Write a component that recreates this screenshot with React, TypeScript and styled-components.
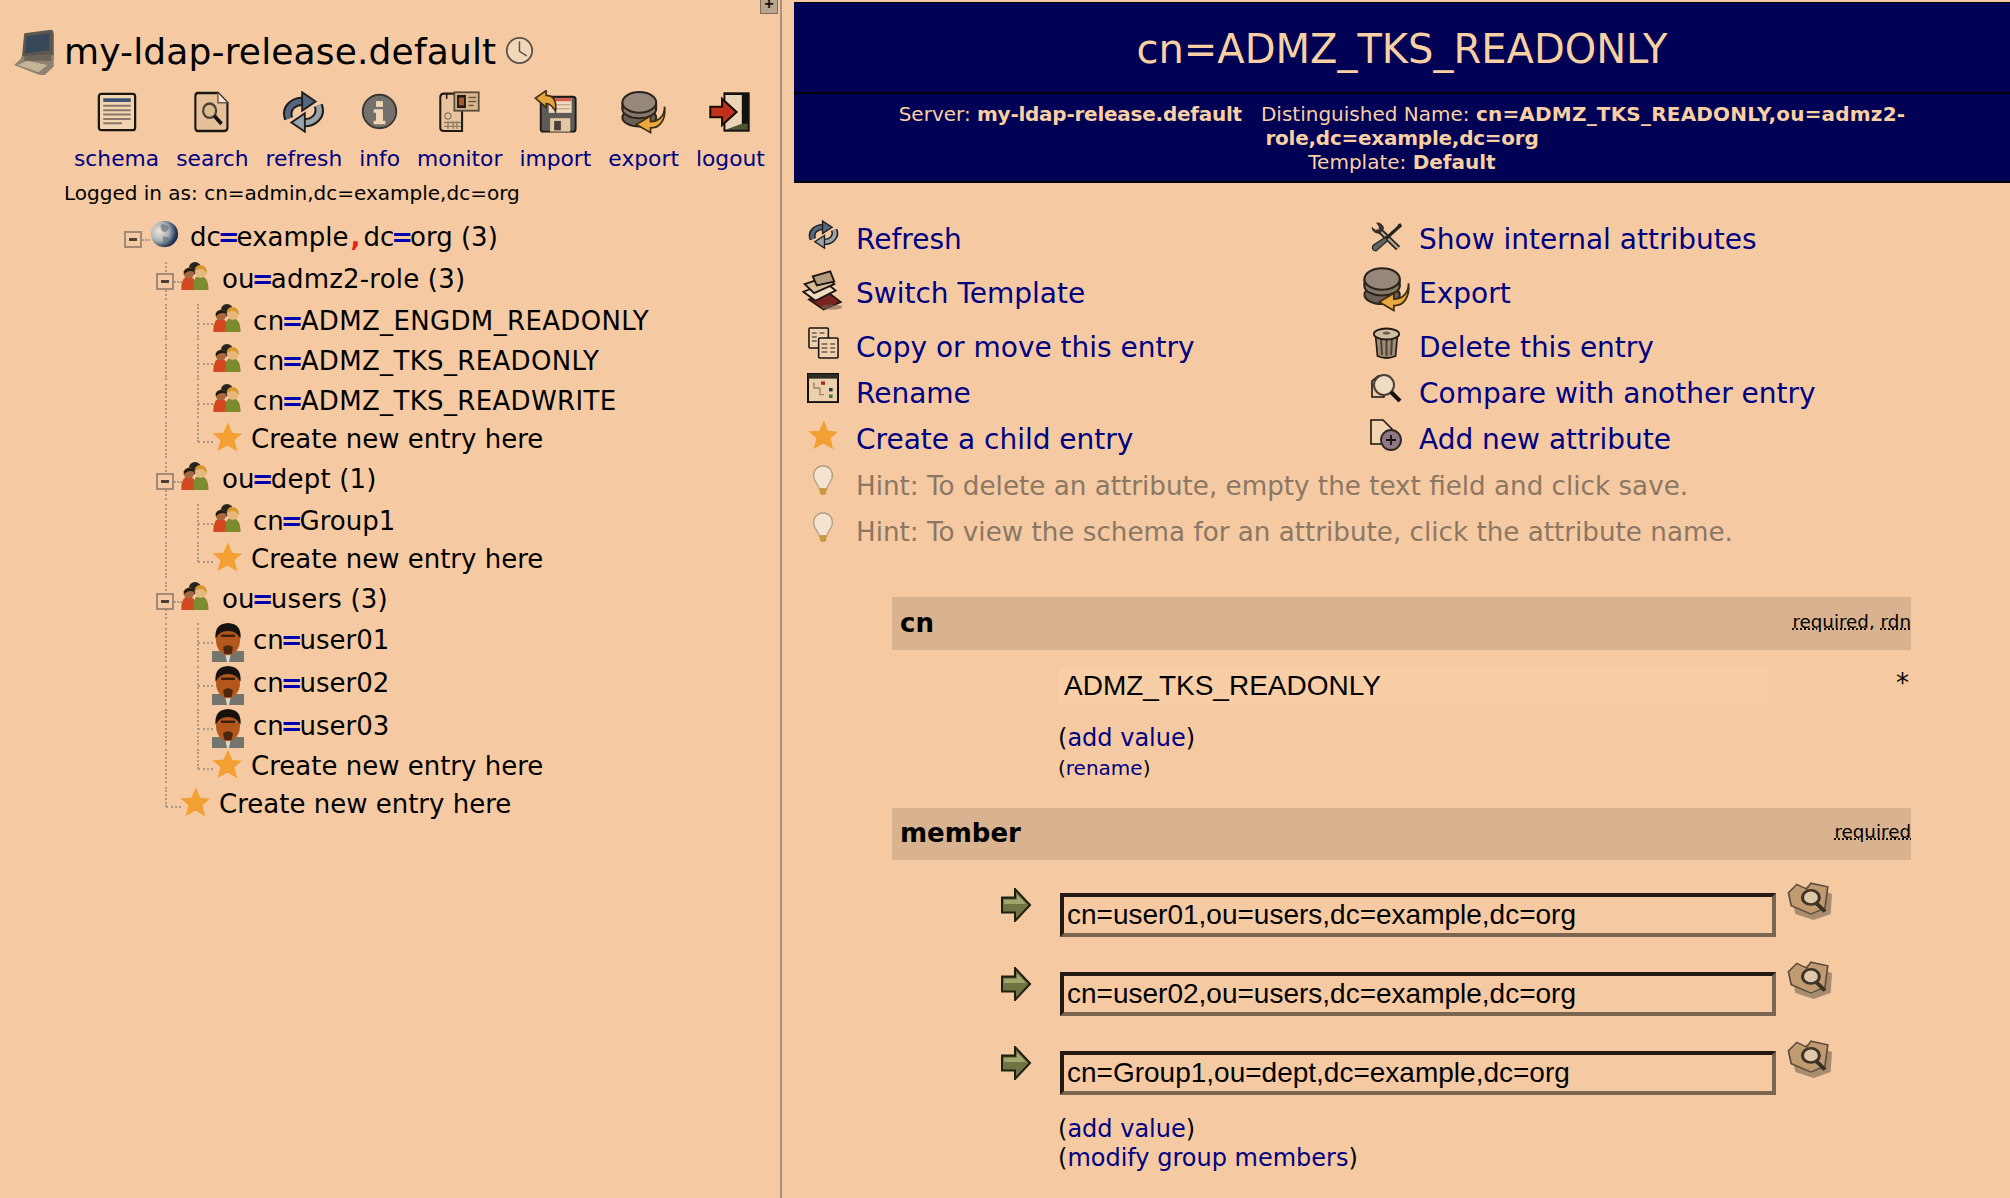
import styled, { createGlobalStyle } from "styled-components";
import { ReactNode } from "react";

const GlobalStyle = createGlobalStyle`
  html, body {
    margin: 0;
    height: 100%;
    overflow: hidden;
    background: #f5caa3;
  }
  body {
    font-family: "DejaVu Sans", Verdana, sans-serif;
    color: #000;
  }
`;

type IconProps = { w?: number; h?: number; up?: number };

const Glyph = styled.svg<{ $w: number; $h: number; $up: number }>`
  display: block;
  flex: none;
  width: ${(p) => p.$w}px;
  height: ${(p) => p.$h}px;
  margin-bottom: ${(p) => p.$up}px;
  filter: blur(0.45px);
`;

const Icon = ({ w = 30, h = 30, up = 0, children }: IconProps & { children: ReactNode }) => (
  <Glyph viewBox="0 0 32 32" preserveAspectRatio="none" $w={w} $h={h} $up={up}>
    {children}
  </Glyph>
);

const ComputerIcon = (p: IconProps) => (
  <Icon {...p}>
    <path d="M8 3 L29 0.5 Q31 1 31 4 L31 19 L30 24 L6 21 Z" fill="#5e574d" />
    <path d="M10 5 L28 3 L27.5 15 L8.5 17 Z" fill="#36485a" />
    <path d="M6 19 L31 18 L31 26 L24 32 L20 32 L0 25 L5 21 Z" fill="#8f8270" />
    <path d="M3 25 L19 30 L26 25 L10 22 Z" fill="#c6b498" />
    <path d="M8 19 L29 18 L29 22 L8 22 Z" fill="#6c6457" />
  </Icon>
);

const ClockIcon = (p: IconProps) => (
  <Icon {...p}>
    <circle cx="16" cy="16" r="14" fill="#f0d7ba" stroke="#5b5045" strokeWidth="2" />
    <path d="M16 6 L16 17 L24 22" fill="none" stroke="#5b5045" strokeWidth="1.6" />
  </Icon>
);

const SchemaIcon = (p: IconProps) => (
  <Icon {...p}>
    <rect x="1.5" y="1.5" width="29" height="29" rx="2" fill="#f2d4b0" stroke="#1a1612" strokeWidth="1.8" />
    <rect x="5" y="5" width="22" height="3" fill="#3c5270" />
    <path d="M5 11 H27 M5 14.5 H27 M5 18 H27 M5 21.5 H27 M5 25 H20" stroke="#86796a" strokeWidth="1.6" />
  </Icon>
);

const SearchPageIcon = (p: IconProps) => (
  <Icon {...p}>
    <path d="M4 1.5 H21 L29 9 V28 Q29 30.5 26 30.5 H4 Q2 30.5 2 28 V4 Q2 1.5 4 1.5 Z" fill="#e6c098" stroke="#1c1712" strokeWidth="1.8" />
    <path d="M21 1.5 V9 H29" fill="#f7e3cb" stroke="#6a5b4b" strokeWidth="1.2" />
    <circle cx="14" cy="15" r="5.5" fill="#d9bb8e" stroke="#4a4036" strokeWidth="1.8" />
    <path d="M18 19 L24 25" stroke="#14110e" strokeWidth="3" />
  </Icon>
);

const RefreshIcon = (p: IconProps) => (
  <Icon {...p}>
    <path d="M5 21 C2 13 9 7 17 8" fill="none" stroke="#1d1d1d" strokeWidth="7" />
    <path d="M5 21 C2 13 9 7 17 8" fill="none" stroke="#54677c" strokeWidth="4" />
    <path d="M15 1 L25 8 L15 15 Z" fill="#54677c" stroke="#1d1d1d" strokeWidth="1.4" />
    <path d="M27 11 C30 19 23 25 15 24" fill="none" stroke="#1d1d1d" strokeWidth="7" />
    <path d="M27 11 C30 19 23 25 15 24" fill="none" stroke="#98a4a8" strokeWidth="4" />
    <path d="M17 17 L7 24 L17 31 Z" fill="#98a4a8" stroke="#1d1d1d" strokeWidth="1.4" />
  </Icon>
);

const InfoIcon = (p: IconProps) => (
  <Icon {...p}>
    <circle cx="16" cy="16" r="14.5" fill="#74706c" stroke="#3a3632" strokeWidth="1.6" />
    <rect x="13" y="7" width="6" height="5" fill="#f0d6b4" />
    <path d="M11 14 H19 V24 H21 V27 H11 V24 H13 V17 H11 Z" fill="#f0d6b4" />
  </Icon>
);

const MonitorIcon = (p: IconProps) => (
  <Icon {...p}>
    <path d="M4 2 H18 V30.5 H4 Q1 30.5 1 28 V5 Q1 2 4 2 Z" fill="#e8c49e" stroke="#1f1a15" strokeWidth="1.6" />
    <path d="M6 2 V6" stroke="#1f1a15" strokeWidth="1.2" />
    <circle cx="7" cy="19" r="2.4" fill="none" stroke="#8c7c68" strokeWidth="1" />
    <path d="M4 24 H17 M4 27 H17 M7 23 V29 M11 23 V29 M14 23 V29" stroke="#8c7c68" strokeWidth="1" />
    <rect x="12" y="1" width="19" height="14" fill="#dcb68e" stroke="#5a4c3c" strokeWidth="1.4" />
    <rect x="14" y="3" width="7" height="10" fill="#1e1a16" />
    <rect x="15.5" y="5" width="4" height="6" fill="#a8582a" />
    <path d="M23 5 H29 M23 8 H29 M23 11 H27" stroke="#6a5a48" strokeWidth="1.2" />
  </Icon>
);

const ImportIcon = (p: IconProps) => (
  <Icon {...p}>
    <path d="M5 5 H29 Q31 5 31 7 V29 Q31 31 29 31 H7 Q5 31 5 29 Z" fill="#5d5a58" stroke="#1c1916" strokeWidth="1.4" />
    <rect x="11" y="6" width="17" height="11" fill="#f3dcc0" />
    <rect x="11" y="6" width="17" height="2.4" fill="#d0604a" />
    <path d="M13 11 H27 M13 14 H27" stroke="#c9a88a" strokeWidth="1.2" />
    <rect x="12" y="21" width="15" height="10" fill="#e6c7a3" />
    <rect x="15" y="23" width="5" height="7" fill="#47413b" />
    <path d="M1 6 L9 0.5 V4 C15 4 17 9 16 16 C14 12 12 10 9 10 V13 Z" fill="#e7a43c" stroke="#3f2d12" strokeWidth="1.2" />
  </Icon>
);

const ExportIcon = (p: IconProps) => (
  <Icon {...p}>
    <ellipse cx="13" cy="20" rx="12" ry="6.5" fill="#6b6053" stroke="#2a241d" strokeWidth="1.4" />
    <ellipse cx="13" cy="14" rx="12" ry="6.5" fill="#857868" stroke="#2a241d" strokeWidth="1.4" />
    <path d="M1 9 V14 M25 9 V14" stroke="#2a241d" strokeWidth="1.4" />
    <ellipse cx="13" cy="9" rx="12" ry="7.5" fill="#96877a" stroke="#2a241d" strokeWidth="1.4" />
    <path d="M31 12 C31 19 27 23 21 23 V19 L11 25 L21 31 V27.5 C28 28 32 21 31 12 Z" fill="#eaa83f" stroke="#3f2d12" strokeWidth="1.2" />
  </Icon>
);

const LogoutIcon = (p: IconProps) => (
  <Icon {...p}>
    <rect x="11" y="1" width="20" height="30" fill="#14120f" />
    <path d="M12.5 3 H25 V27 L12.5 29.5 Z" fill="#ecd5b6" />
    <path d="M12.5 29.5 L25 25 H29.5 V29.5 Z" fill="#4f5437" />
    <path d="M1 12 H10 V6 L21 16 L10 26 V20 H1 Z" fill="#c0321e" stroke="#1a0d08" strokeWidth="1.6" />
  </Icon>
);

const GroupIcon = (p: IconProps) => (
  <Icon {...p}>
    <circle cx="16" cy="7" r="7" fill="#28241f" />
    <path d="M0.5 32 Q-0.5 17 9 16 Q17 17 18 32 Z" fill="#d2491f" />
    <circle cx="9" cy="12.5" r="6.2" fill="#a8683e" />
    <path d="M3 11 Q8 4 15 9 L15 11 Q8 8.5 4 14 Z" fill="#1e1a16" />
    <path d="M14 32 Q13 16 22 15.5 Q31.5 17 31.5 32 Z" fill="#7c8a30" />
    <circle cx="22.5" cy="11.5" r="6.6" fill="#e6b880" />
    <path d="M15.5 11 Q16 3 22.5 3.5 Q30 4 29.5 13 Q26 7 21 8 Q18 9 15.5 11 Z" fill="#d49a2e" />
  </Icon>
);

const UserIcon = (p: IconProps) => (
  <Icon {...p}>
    <rect x="0" y="23" width="32" height="9" fill="#74756f" />
    <path d="M13 24 H19 L17 32 H15 Z" fill="#dfd8c8" />
    <ellipse cx="16" cy="14" rx="12" ry="12.5" fill="#b4571c" />
    <path d="M3.5 13 Q2 0.5 16 0 Q30 0.5 28.5 13 Q25 6.5 16 6.5 Q7 6.5 3.5 13 Z" fill="#17120e" />
    <path d="M9 10.5 H23" stroke="#3d200c" strokeWidth="2" />
    <path d="M11 20 Q16 16.5 21 20 L19.5 25.5 H12.5 Z" fill="#4b2810" />
  </Icon>
);

const StarIcon = (p: IconProps) => (
  <Icon {...p}>
    <path d="M17 0.5 L21.5 11.5 L32 12.5 L24 19.5 L27 31.5 L16.5 25 L6 31 L9 19.5 L0.5 12 L12 11.5 Z" fill="#f2a033" />
  </Icon>
);

const GlobeShade = styled.radialGradient``;

const GlobeIcon = (p: IconProps) => (
  <Icon {...p}>
    <defs>
      <GlobeShade id="globe-shade" cx="0.3" cy="0.4" r="0.8">
        <stop offset="0" stopColor="#efe6d8" />
        <stop offset="0.45" stopColor="#a9b2b6" />
        <stop offset="0.8" stopColor="#1f3358" />
        <stop offset="1" stopColor="#15243f" />
      </GlobeShade>
    </defs>
    <circle cx="16" cy="16" r="15" fill="url(#globe-shade)" />
    <path d="M12 5 Q19 4 21 9 Q18 15 14 13 Q11 10 12 5 Z M14 19 Q20 18 21 22 Q18 28 15 27 Z" fill="#6e7a80" opacity="0.75" />
  </Icon>
);

const TemplateIcon = (p: IconProps) => (
  <Icon {...p}>
    <path d="M5 23 L19 17 L29 25 L16 31 Z" fill="#7a2422" stroke="#1c1410" strokeWidth="1.2" />
    <path d="M1 17 L18 10 L25 16 L10 24 Z" fill="#f2dcc0" stroke="#1c1410" strokeWidth="1.4" />
    <path d="M2 11 L19 5 L24 11 L9 18 Z" fill="#d9bd98" stroke="#1c1410" strokeWidth="1.4" />
    <path d="M8 5 L21 1 L24 9 L11 12 Z" fill="#b39a7c" stroke="#1c1410" strokeWidth="1.4" />
    <ellipse cx="22" cy="29" rx="8" ry="2" fill="#7a6250" opacity="0.6" />
  </Icon>
);

const CopyIcon = (p: IconProps) => (
  <Icon {...p}>
    <rect x="1" y="1" width="20" height="20" rx="1" fill="#f0d2ae" stroke="#191512" strokeWidth="1.6" />
    <path d="M4 6 H9 M4 10 H9 M12 6 H17 M4 14 H9" stroke="#6a5c4c" strokeWidth="1.6" />
    <rect x="11" y="11" width="20" height="20" rx="1" fill="#f0d2ae" stroke="#191512" strokeWidth="1.6" />
    <path d="M14 17 H20 M14 21 H20 M14 25 H20 M23 17 H28 M23 21 H28 M23 25 H28" stroke="#6a5c4c" strokeWidth="1.6" />
  </Icon>
);

const RenameIcon = (p: IconProps) => (
  <Icon {...p}>
    <rect x="1" y="1" width="30" height="30" fill="#ecd0ac" stroke="#14110d" strokeWidth="2" />
    <rect x="1" y="1" width="30" height="5" fill="#2e2a24" />
    <path d="M7 10 V16 H13 M13 16 V23 H17" fill="none" stroke="#9a8468" strokeWidth="1.4" />
    <rect x="14" y="9" width="4" height="3.6" fill="#b0261e" />
    <rect x="22" y="16" width="3.6" height="3.6" fill="#26384a" />
    <rect x="22" y="23" width="3.6" height="3.6" fill="#3d7a34" />
  </Icon>
);

const BulbIcon = (p: IconProps) => (
  <Icon {...p}>
    <path d="M16 1 C26 1 30 8 28 14 C26 19 22 20 21 25 H11 C10 20 6 19 4 14 C2 8 6 1 16 1 Z" fill="#f3e3cf" stroke="#b09d86" strokeWidth="1.6" />
    <path d="M11 24 H21 L20 30 Q16 32 12 30 Z" fill="#c9993f" />
  </Icon>
);

const ToolsIcon = (p: IconProps) => (
  <Icon {...p}>
    <path d="M7 7 L28 28" stroke="#2a241e" strokeWidth="6" />
    <path d="M7 7 L28 28" stroke="#b8a68e" strokeWidth="2.4" />
    <path d="M1 6 L6 10 L10 7 L6 1 Q12 1 13 7 L9 12 Q2 12 1 6 Z" fill="#3e362c" stroke="#2a241e" strokeWidth="1" />
    <path d="M29 2 L30 4 L14 19" fill="none" stroke="#2a241e" strokeWidth="3.4" />
    <path d="M15 16 L2 25 Q0 30 5 31 L17 20 Z" fill="#5e6468" stroke="#2a241e" strokeWidth="1.2" />
  </Icon>
);

const TrashIcon = (p: IconProps) => (
  <Icon {...p}>
    <path d="M4 9 H28 L26 29 Q16 33 6 29 Z" fill="#a08c72" stroke="#1e1914" strokeWidth="1.8" />
    <path d="M10 12 L11 28 M16 12 V29 M22 12 L21 28" stroke="#4b4033" strokeWidth="2.2" />
    <ellipse cx="16" cy="7" rx="14" ry="5.5" fill="#d0bc9e" stroke="#1e1914" strokeWidth="1.8" />
    <ellipse cx="16" cy="6" rx="4" ry="1.6" fill="#6a5c4c" />
  </Icon>
);

const CompareIcon = (p: IconProps) => (
  <Icon {...p}>
    <path d="M2 8 L8 3 H14 V24 H2 Z" fill="#ecc9a4" stroke="#191512" strokeWidth="1.6" />
    <circle cx="14" cy="12" r="10" fill="#f0dcc2" stroke="#4a4036" strokeWidth="2" />
    <path d="M21 19 L30 28" stroke="#14110e" strokeWidth="4" />
  </Icon>
);

const AddAttrIcon = (p: IconProps) => (
  <Icon {...p}>
    <path d="M1 1 H13 L22 10 V25 H1 Z" fill="#f2d4b0" stroke="#191512" strokeWidth="1.6" />
    <circle cx="21" cy="21" r="10" fill="#8f7684" stroke="#2e2620" strokeWidth="1.8" />
    <path d="M16 21 H26 M21 16 V26" stroke="#1a1512" strokeWidth="1.8" />
  </Icon>
);

const ArrowIcon = (p: IconProps) => (
  <Icon {...p}>
    <path d="M2 9 H15 V1 L30 16 L15 31 V23 H2 Z" fill="#6f7442" stroke="#1e1f10" strokeWidth="2" />
    <path d="M4 11 H17 V6 L26 15 H4 Z" fill="#a0a56c" />
  </Icon>
);

const LookupIcon = (p: IconProps) => (
  <Icon {...p}>
    <path d="M3 12 L15 3 L32 10 L31 27 L19 32 L6 27 Z" fill="#4c4033" opacity="0.45" />
    <path d="M1 9 L7 2 L14 6 L17 1 L29 4 L27 22 L17 27 L3 20 Z" fill="#c09a70" stroke="#5e4d3b" strokeWidth="1.2" />
    <circle cx="17" cy="13" r="6" fill="#e0c8a8" stroke="#3f3428" strokeWidth="2.2" />
    <path d="M21 18 L27 25" stroke="#3a3024" strokeWidth="3" />
  </Icon>
);

const Frame = styled.div`
  display: flex;
  height: 100vh;
`;

const LeftPane = styled.div`
  position: relative;
  flex: none;
  width: 780px;
  border-right: 2px solid #a58f80;
`;

const ExpandButton = styled.span`
  position: absolute;
  top: 0;
  right: 2px;
  width: 16px;
  height: 13px;
  background: #b9a58e;
  border: 1px solid #7d6c5b;
  border-top: none;
  font: bold 16px/11px "Liberation Mono", monospace;
  text-align: center;
  color: #15120e;
`;

const ServerRow = styled.div`
  display: flex;
  align-items: center;
  height: 45px;
  margin-top: 29px;
  margin-bottom: 2px;
  padding-left: 14px;
  gap: 9px;
`;

const ServerName = styled.h1`
  margin: 0;
  font-size: 36px;
  font-weight: normal;
  line-height: 40px;
  letter-spacing: 0.15px;
`;

const ClockSlot = styled.span`
  margin: 0 0 2px 0;
`;

const Toolbar = styled.nav`
  display: flex;
  gap: 17px;
  margin-top: 15px;
  padding-left: 74px;
`;

const ToolItem = styled.a`
  display: flex;
  flex-direction: column;
  align-items: center;
  color: #000080;
  font-size: 21.8px;
  line-height: 28px;
`;

const ToolIconBox = styled.span`
  display: flex;
  align-items: center;
  height: 45px;
  margin-bottom: 11px;
`;

const LoggedIn = styled.div`
  margin: 6px 0 13px 64px;
  font-size: 20px;
  line-height: 28px;
`;

const TreeRow = styled.div<{ $h: number; $pad: number; $gap: number }>`
  position: relative;
  display: flex;
  align-items: flex-start;
  height: ${(p) => p.$h}px;
  padding-left: ${(p) => p.$pad}px;
  gap: ${(p) => p.$gap}px;
`;

const TreeText = styled.span<{ $spread: number; $lead: number }>`
  margin-left: ${(p) => p.$lead}px;
  font-size: 26px;
  line-height: 34px;
  white-space: nowrap;
  letter-spacing: ${(p) => p.$spread}px;
`;

const Eq = styled.b`
  margin: 0 -3px;
  color: #0000b0;
`;

const Comma = styled.b`
  color: #e8201a;
  margin: 0 3px 0 2px;
`;

const Toggle = styled.span`
  flex: none;
  box-sizing: border-box;
  position: relative;
  width: 18px;
  height: 17px;
  margin-top: 11px;
  border: 2px solid #a08a76;
  background: #f5caa3;
  z-index: 1;

  &::after {
    content: "";
    position: absolute;
    left: 3px;
    right: 3px;
    top: 5px;
    height: 3px;
    background: #4a4036;
  }
`;

const GuideV = styled.i<{ $x: number; $short?: boolean }>`
  position: absolute;
  top: 0;
  left: ${(p) => p.$x}px;
  height: ${(p) => (p.$short ? "20px" : "calc(100% - 4px)")};
  border-left: 2px dotted #ab9a88;
`;

const GuideH = styled.i<{ $x: number; $w: number }>`
  position: absolute;
  top: 19px;
  left: ${(p) => p.$x}px;
  width: ${(p) => p.$w}px;
  border-top: 2px dotted #ab9a88;
`;

const RightPane = styled.div`
  flex: 1;
  min-width: 0;
  padding: 2px 0 0 12px;
`;

const Banner = styled.header`
  box-sizing: border-box;
  height: 181px;
  background: #000055;
  border-top: 1px solid #000;
  border-bottom: 2px solid #000;
  color: #f9d0a4;
  text-align: center;
`;

const BannerTitle = styled.h2`
  margin: 0;
  height: 89px;
  border-bottom: 2px solid #000;
  font-size: 40px;
  font-weight: normal;
  line-height: 92px;
`;

const BannerInfo = styled.div`
  padding-top: 8px;
  font-size: 20px;
  line-height: 24px;
`;

const TightBold = styled.b`
  letter-spacing: -0.25px;
`;

const WideBold = styled.b`
  letter-spacing: 0.2px;
`;

const ActionGrid = styled.div`
  display: grid;
  grid-template-columns: 563px 1fr;
  margin-top: 31px;
`;

const ActionRow = styled.div<{ $h: number; $wide?: boolean }>`
  display: flex;
  align-items: center;
  height: ${(p) => p.$h}px;
  ${(p) => (p.$wide ? "grid-column: 1 / 3;" : "")}
`;

const ActionIconCell = styled.span`
  flex: none;
  display: flex;
  justify-content: center;
  width: 58px;
  margin-right: 4px;
`;

const ActionLink = styled.a`
  color: #000080;
  font-size: 28px;
`;

const HintText = styled.span`
  color: #8c7763;
  font-size: 26.2px;
`;

const AttrSection = styled.section`
  width: 1019px;
  margin: 42px 0 0 98px;
`;

const AttrBar = styled.div<{ $top?: number }>`
  display: flex;
  align-items: center;
  justify-content: space-between;
  height: ${(p) => (p.$top ? 52 : 53)}px;
  margin-top: ${(p) => p.$top ?? 0}px;
  background: #d9b38f;
`;

const AttrName = styled.b`
  padding: 0 0 2px 8px;
  font-size: 26px;
`;

const AttrFlags = styled.span`
  margin-top: -5px;
  font-size: 18.3px;
`;

const Flag = styled.abbr`
  text-decoration: underline dotted;
`;

const ValueRow = styled.div`
  display: flex;
  align-items: flex-start;
  margin-top: 18px;
  padding-left: 166px;
`;

const ReadonlyValue = styled.div`
  box-sizing: border-box;
  width: 710px;
  height: 36px;
  padding-left: 6px;
  background: #f7cea5;
  font-family: "Liberation Sans", Arial, sans-serif;
  font-size: 28px;
  line-height: 36px;
`;

const Required = styled.span`
  margin-left: auto;
  padding-right: 2px;
  font-size: 26px;
  line-height: 30px;
`;

const LinkLine = styled.div<{ $small?: boolean; $top?: number }>`
  margin-top: ${(p) => p.$top ?? 0}px;
  padding-left: 166px;
  font-size: ${(p) => (p.$small ? 20 : 24)}px;
  line-height: 30px;
`;

const InlineLink = styled.a`
  color: #000080;
`;

const MemberList = styled.div`
  display: flex;
  flex-direction: column;
  gap: 23px;
  margin: 22px 0 18px;
`;

const MemberRow = styled.div`
  display: flex;
  align-items: flex-start;
  height: 56px;
  padding-left: 108px;
`;

const ArrowSlot = styled.span`
  margin: 6px 28px 0 0;
`;

const LookupSlot = styled.span`
  margin-left: 11px;
`;

const MemberInput = styled.input`
  box-sizing: border-box;
  width: 716px;
  height: 44px;
  margin-top: 11px;
  padding: 0 3px;
  border-style: solid;
  border-width: 4px;
  border-color: #231a14 #7a6650 #7a6650 #231a14;
  background: #f5caa3;
  color: #000;
  font-family: "Liberation Sans", Arial, sans-serif;
  font-size: 28px;
  outline: none;
`;

const tools = [
  { label: "schema", icon: <SchemaIcon w={40} h={40} /> },
  { label: "search", icon: <SearchPageIcon w={38} h={42} /> },
  { label: "refresh", icon: <RefreshIcon w={43} h={42} /> },
  { label: "info", icon: <InfoIcon w={37} h={37} /> },
  { label: "monitor", icon: <MonitorIcon w={41} h={42} /> },
  { label: "import", icon: <ImportIcon w={43} h={43} /> },
  { label: "export", icon: <ExportIcon w={45} h={44} /> },
  { label: "logout", icon: <LogoutIcon w={42} h={42} /> },
];

const Dn = ({ text }: { text: string }) => (
  <>
    {text.split(/([=,])/).map((part, i) =>
      part === "=" ? <Eq key={i}>=</Eq> : part === "," ? <Comma key={i}>,</Comma> : part
    )}
  </>
);

type Kind = "root" | "ou" | "group" | "user" | "create" | "last";

const layout: Record<Kind, { pad: number; gap: number; lead: number }> = {
  root: { pad: 124, gap: 8, lead: 3 },
  ou: { pad: 156, gap: 7, lead: 6 },
  group: { pad: 213, gap: 12, lead: 0 },
  user: { pad: 212, gap: 9, lead: 0 },
  create: { pad: 212, gap: 9, lead: 0 },
  last: { pad: 180, gap: 9, lead: 0 },
};

const nodes: { kind: Kind; h: number; text: string }[] = [
  { kind: "root", h: 42, text: "dc=example,dc=org (3)" },
  { kind: "ou", h: 42, text: "ou=admz2-role (3)" },
  { kind: "group", h: 40, text: "cn=ADMZ_ENGDM_READONLY" },
  { kind: "group", h: 40, text: "cn=ADMZ_TKS_READONLY" },
  { kind: "group", h: 38, text: "cn=ADMZ_TKS_READWRITE" },
  { kind: "create", h: 40, text: "Create new entry here" },
  { kind: "ou", h: 42, text: "ou=dept (1)" },
  { kind: "group", h: 38, text: "cn=Group1" },
  { kind: "create", h: 40, text: "Create new entry here" },
  { kind: "ou", h: 41, text: "ou=users (3)" },
  { kind: "user", h: 43, text: "cn=user01" },
  { kind: "user", h: 43, text: "cn=user02" },
  { kind: "user", h: 40, text: "cn=user03" },
  { kind: "create", h: 38, text: "Create new entry here" },
  { kind: "last", h: 40, text: "Create new entry here" },
];

const spreadFor = (kind: Kind, text: string) => {
  if (text.includes("ADMZ")) return 0.35;
  if (kind === "ou") return 0.2;
  return 0;
};

const TreeNode = ({ kind, h, text }: { kind: Kind; h: number; text: string }) => (
  <TreeRow $h={h} $pad={layout[kind].pad} $gap={layout[kind].gap}>
    {kind !== "root" && <GuideV $x={165} $short={kind === "last"} />}
    {(kind === "group" || kind === "user") && <GuideV $x={197} />}
    {kind === "create" && <GuideV $x={197} $short />}
    {kind === "root" && <GuideH $x={142} $w={8} />}
    {kind === "ou" && <GuideH $x={174} $w={8} />}
    {(kind === "group" || kind === "user" || kind === "create") && <GuideH $x={198} $w={15} />}
    {kind === "last" && <GuideH $x={166} $w={15} />}
    {(kind === "root" || kind === "ou") && <Toggle />}
    {kind === "root" && <GlobeIcon w={29} h={28} />}
    {(kind === "ou" || kind === "group") && <GroupIcon w={28} h={28} />}
    {kind === "user" && <UserIcon w={32} h={39} />}
    {(kind === "create" || kind === "last") && <StarIcon w={30} h={30} />}
    <TreeText $spread={spreadFor(kind, text)} $lead={layout[kind].lead}>
      <Dn text={text} />
    </TreeText>
  </TreeRow>
);

const Lookup = () => (
  <LookupSlot>
    <LookupIcon w={45} h={38} />
  </LookupSlot>
);

const members = [
  "cn=user01,ou=users,dc=example,dc=org",
  "cn=user02,ou=users,dc=example,dc=org",
  "cn=Group1,ou=dept,dc=example,dc=org",
];

const App = () => {
  return (
    <Frame>
      <GlobalStyle />
      <LeftPane>
        <ExpandButton>+</ExpandButton>
        <ServerRow>
          <ComputerIcon w={41} h={46} />
          <ServerName>my-ldap-release.default</ServerName>
          <ClockSlot>
            <ClockIcon w={29} h={29} />
          </ClockSlot>
        </ServerRow>
        <Toolbar>
          {tools.map((t) => (
            <ToolItem key={t.label}>
              <ToolIconBox>{t.icon}</ToolIconBox>
              {t.label}
            </ToolItem>
          ))}
        </Toolbar>
        <LoggedIn>Logged in as: cn=admin,dc=example,dc=org</LoggedIn>
        {nodes.map((n, i) => (
          <TreeNode key={i} kind={n.kind} h={n.h} text={n.text} />
        ))}
      </LeftPane>
      <RightPane>
        <Banner>
          <BannerTitle>cn=ADMZ_TKS_READONLY</BannerTitle>
          <BannerInfo>
            Server: <TightBold>my-ldap-release.default</TightBold> &nbsp; Distinguished Name:{" "}
            <WideBold>cn=ADMZ_TKS_READONLY,ou=admz2-</WideBold>
            <br />
            <TightBold>role,dc=example,dc=org</TightBold>
            <br />
            Template: <b>Default</b>
          </BannerInfo>
        </Banner>
        <ActionGrid>
          <ActionRow $h={50}>
            <ActionIconCell><RefreshIcon w={31} h={29} up={9} /></ActionIconCell>
            <ActionLink>Refresh</ActionLink>
          </ActionRow>
          <ActionRow $h={50}>
            <ActionIconCell><ToolsIcon w={31} h={30} up={4} /></ActionIconCell>
            <ActionLink>Show internal attributes</ActionLink>
          </ActionRow>
          <ActionRow $h={59}>
            <ActionIconCell><TemplateIcon w={43} h={41} up={7} /></ActionIconCell>
            <ActionLink>Switch Template</ActionLink>
          </ActionRow>
          <ActionRow $h={59}>
            <ActionIconCell><ExportIcon w={47} h={46} up={10} /></ActionIconCell>
            <ActionLink>Export</ActionLink>
          </ActionRow>
          <ActionRow $h={48}>
            <ActionIconCell><CopyIcon w={31} h={32} up={8} /></ActionIconCell>
            <ActionLink>Copy or move this entry</ActionLink>
          </ActionRow>
          <ActionRow $h={48}>
            <ActionIconCell><TrashIcon w={29} h={32} up={8} /></ActionIconCell>
            <ActionLink>Delete this entry</ActionLink>
          </ActionRow>
          <ActionRow $h={44}>
            <ActionIconCell><RenameIcon w={32} h={30} up={10} /></ActionIconCell>
            <ActionLink>Rename</ActionLink>
          </ActionRow>
          <ActionRow $h={44}>
            <ActionIconCell><CompareIcon w={32} h={32} up={8} /></ActionIconCell>
            <ActionLink>Compare with another entry</ActionLink>
          </ActionRow>
          <ActionRow $h={48}>
            <ActionIconCell><StarIcon w={30} h={30} up={8} /></ActionIconCell>
            <ActionLink>Create a child entry</ActionLink>
          </ActionRow>
          <ActionRow $h={48}>
            <ActionIconCell><AddAttrIcon w={32} h={32} up={8} /></ActionIconCell>
            <ActionLink>Add new attribute</ActionLink>
          </ActionRow>
          <ActionRow $h={46} $wide>
            <ActionIconCell><BulbIcon w={24} h={31} up={11} /></ActionIconCell>
            <HintText>Hint: To delete an attribute, empty the text field and click save.</HintText>
          </ActionRow>
          <ActionRow $h={46} $wide>
            <ActionIconCell><BulbIcon w={24} h={31} up={10} /></ActionIconCell>
            <HintText>Hint: To view the schema for an attribute, click the attribute name.</HintText>
          </ActionRow>
        </ActionGrid>
        <AttrSection>
          <AttrBar>
            <AttrName>cn</AttrName>
            <AttrFlags>
              <Flag>required</Flag>, <Flag>rdn</Flag>
            </AttrFlags>
          </AttrBar>
          <ValueRow>
            <ReadonlyValue>ADMZ_TKS_READONLY</ReadonlyValue>
            <Required>*</Required>
          </ValueRow>
          <LinkLine $top={19}>
            (<InlineLink>add value</InlineLink>)
          </LinkLine>
          <LinkLine $small>
            (<InlineLink>rename</InlineLink>)
          </LinkLine>
          <AttrBar $top={25}>
            <AttrName>member</AttrName>
            <AttrFlags>
              <Flag>required</Flag>
            </AttrFlags>
          </AttrBar>
          <MemberList>
            {members.map((m) => (
              <MemberRow key={m}>
                <ArrowSlot>
                  <ArrowIcon w={32} h={34} />
                </ArrowSlot>
                <MemberInput defaultValue={m} />
                <Lookup />
              </MemberRow>
            ))}
          </MemberList>
          <LinkLine>
            (<InlineLink>add value</InlineLink>)
          </LinkLine>
          <LinkLine $top={-1}>
            (<InlineLink>modify group members</InlineLink>)
          </LinkLine>
        </AttrSection>
      </RightPane>
    </Frame>
  );
};

export default App;
